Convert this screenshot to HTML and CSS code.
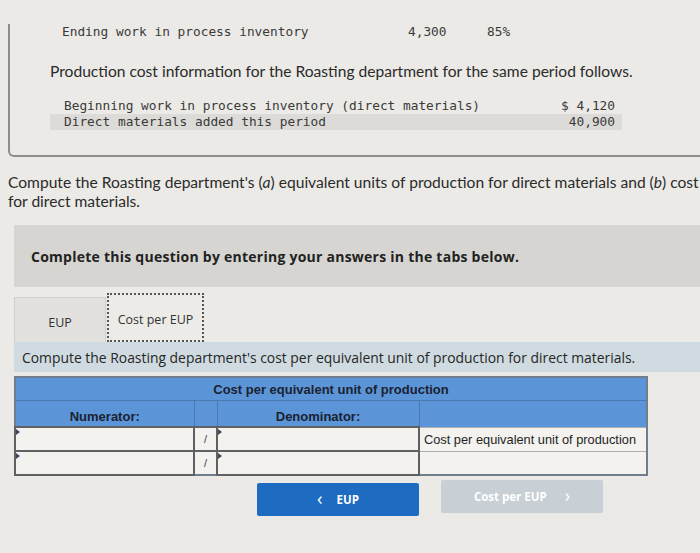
FILE: index.html
```html
<!DOCTYPE html>
<html>
<head>
<meta charset="utf-8">
<link rel="stylesheet" href="styles.css">
</head>
<body>
<div class="problem">
  <div class="mono units">
    <span class="ulabel">Ending work in process inventory</span>
    <span class="uval">4,300</span>
    <span class="upct">85%</span>
  </div>
  <p class="info">Production cost information for the Roasting department for the same period follows.</p>
  <div class="mono costs">
    <div class="crow"><span>Beginning work in process inventory (direct materials)</span><span>$ 4,120</span></div>
    <div class="crow shade"><span>Direct materials added this period</span><span>40,900</span></div>
  </div>
</div>
<div class="promptwrap">
  <p class="prompt">Compute the Roasting department's (<i>a</i>) equivalent units of production for direct materials and (<i>b</i>) cost per equivalent unit of production<br>for direct materials.</p>
</div>
<div class="complete">Complete this question by entering your answers in the tabs below.</div>
<div class="tabs">
  <div class="tab">EUP</div>
  <div class="tab active">Cost per EUP</div>
</div>
<div class="instr">Compute the Roasting department's cost per equivalent unit of production for direct materials.</div>
<table class="grid">
  <colgroup>
    <col class="c-num"><col class="c-sl"><col class="c-den"><col class="c-res">
  </colgroup>
  <tr class="h1"><th colspan="4">Cost per equivalent unit of production</th></tr>
  <tr class="h2"><th>Numerator:</th><th></th><th>Denominator:</th><th></th></tr>
  <tr class="data">
    <td class="inp"><span class="mark"></span></td>
    <td class="sl">/</td>
    <td class="inp"><span class="mark"></span></td>
    <td class="res">Cost per equivalent unit of production</td>
  </tr>
  <tr class="data">
    <td class="inp"><span class="mark"></span></td>
    <td class="sl">/</td>
    <td class="inp"><span class="mark"></span></td>
    <td class="res"></td>
  </tr>
</table>
<div class="nav">
  <div class="btn prev"><span class="chev">&#x2039;</span><span>EUP</span></div>
  <div class="btn next"><span>Cost per EUP</span><span class="chev">&#x203A;</span></div>
</div>
</body>
</html>
```
FILE: styles.css
```css
html, body {
  margin: 0;
  padding: 0;
}
body {
  background: #ebeae6;
  width: 700px;
  height: 553px;
  overflow: hidden;
  font-family: Lato, "Open Sans", sans-serif;
  color: #2b2b2b;
}
.mono {
  font-family: "DejaVu Sans Mono", monospace;
  font-size: 12.8px;
  color: #3a3a3a;
}
.problem {
  margin: 24px 0 0 8px;
  border-left: 2px solid #8d8d8b;
  border-bottom: 2px solid #8d8d8b;
  border-bottom-left-radius: 6px;
  height: 131px;
  width: 690px;
}
.units {
  display: flex;
  line-height: 16px;
  height: 16px;
  padding-left: 52px;
}
.ulabel { width: 346px; }
.uval { width: 79px; }
.info {
  margin: 22px 0 0 40px;
  font-size: 15.6px;
  line-height: 18px;
}
.costs {
  margin: 18px 0 0 40px;
  width: 572px;
  line-height: 16px;
}
.crow {
  display: flex;
  justify-content: space-between;
  padding: 0 7px 0 14px;
}
.crow.shade {
  background: #dcdbd7;
}
.promptwrap {
  width: 700px;
  overflow: hidden;
}
.prompt {
  margin: 16px 0 0 8px;
  font-size: 15.6px;
  line-height: 19px;
  white-space: nowrap;
}
.complete {
  margin: 14px 0 0 14px;
  background: #d6d5d1;
  height: 62px;
  display: flex;
  align-items: center;
  padding-left: 17px;
  font-family: "Open Sans", sans-serif;
  font-weight: bold;
  font-size: 14px;
  letter-spacing: 0.25px;
  color: #222;
}
.tabs {
  display: flex;
  align-items: flex-end;
  margin: 6px 0 0 14px;
  height: 49px;
}
.tab {
  font-family: "Open Sans", sans-serif;
  font-size: 12.5px;
  color: #333;
  display: flex;
  align-items: center;
  justify-content: center;
  height: 45px;
  padding-top: 4px;
  box-sizing: border-box;
}
.tab:first-child {
  width: 92px;
  background: #e2e1dd;
  border: 1px solid #cfcecb;
  border-bottom: none;
}
.tab.active {
  width: 97px;
  height: 49px;
  margin-left: 1px;
  background: #ecebe7;
  border: 2px dotted #555;
}
.instr {
  margin-left: 14px;
  background: #cfdbe0;
  height: 30px;
  display: flex;
  align-items: center;
  padding-left: 8px;
  font-family: "Open Sans", sans-serif;
  font-size: 13.9px;
  color: #262626;
}
.grid {
  margin: 4px 0 0 14px;
  border-collapse: collapse;
  width: 632px;
  table-layout: fixed;
  font-family: "Liberation Sans", Arial, sans-serif;
  font-size: 13px;
  color: #1f1f1f;
  border: 2px solid #6f7d8c;
}
.c-num { width: 179px; }
.c-sl { width: 23px; }
.c-den { width: 202px; }
.c-res { width: 228px; }
.grid th {
  background: #5b95d8;
  font-weight: bold;
  color: #1c2230;
  padding: 0;
}
.h1 th {
  height: 23px;
  padding-top: 2px;
  border-bottom: 1px solid #4a78b0;
  font-size: 13px;
  box-sizing: border-box;
}
.h2 th {
  height: 27px;
  vertical-align: top;
  padding-top: 8px;
  border-right: 1px solid #4a78b0;
  box-sizing: border-box;
}
.data td {
  height: 22px;
  padding: 0;
  background: #f3f2ee;
  border: 2px solid #5f6063;
  position: relative;
}
.data td.sl {
  border: 1px solid #9a9a9a;
  border-top: 2px solid #5f6063;
  text-align: center;
  font-size: 11px;
  color: #444;
}
.data td.res {
  border: 1px solid #b0b0b0;
  padding-left: 4px;
  font-size: 12.8px;
  white-space: nowrap;
}
.mark {
  position: absolute;
  left: 0;
  top: 1px;
  width: 0;
  height: 0;
  border-top: 3px solid transparent;
  border-bottom: 3px solid transparent;
  border-left: 4px solid #3b4a5e;
}
.nav {
  display: flex;
  margin: 7px 0 0 257px;
  gap: 22px;
}
.btn {
  width: 162px;
  height: 33px;
  border-radius: 2px;
  display: flex;
  align-items: center;
  justify-content: center;
  gap: 14px;
  font-family: "Open Sans", sans-serif;
  font-weight: bold;
  font-size: 11.5px;
  color: #fff;
}
.btn.prev {
  background: #1d6cc2;
}
.btn.next {
  background: #c8cfd5;
  margin-top: -3px;
  gap: 18px;
}
.chev {
  font-size: 18px;
  font-weight: normal;
  line-height: 1;
  margin-top: -3px;
}
```
